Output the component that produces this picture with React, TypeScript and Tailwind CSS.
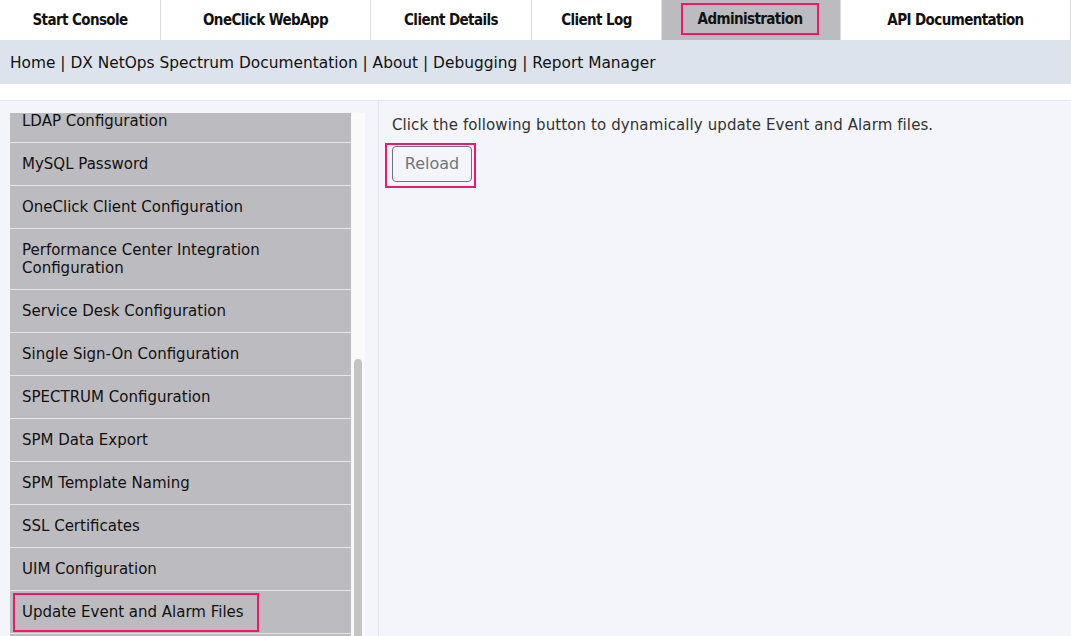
import React from "react";

const tabs = [
  { label: "Start Console", w: "w-[161px]" },
  { label: "OneClick WebApp", w: "w-[210px]" },
  { label: "Client Details", w: "w-[161px]" },
  { label: "Client Log", w: "w-[130px]" },
  { label: "Administration", w: "w-[179px]", active: true },
  { label: "API Documentation", w: "flex-1" },
];

const items: { label: string; tall?: boolean; hl?: boolean }[] = [
  { label: "LDAP Configuration" },
  { label: "MySQL Password" },
  { label: "OneClick Client Configuration" },
  { label: "Performance Center Integration Configuration", tall: true },
  { label: "Service Desk Configuration" },
  { label: "Single Sign-On Configuration" },
  { label: "SPECTRUM Configuration" },
  { label: "SPM Data Export" },
  { label: "SPM Template Naming" },
  { label: "SSL Certificates" },
  { label: "UIM Configuration" },
  { label: "Update Event and Alarm Files", hl: true },
  { label: "" },
];

export default function App() {
  return (
    <div className="w-[1071px] h-[636px] overflow-hidden bg-white flex flex-col font-['DejaVu_Sans',sans-serif] text-[#222]">
      {/* Tabs */}
      <div className="flex h-[40px] shrink-0 bg-white">
        {tabs.map((t, i) => (
          <div
            key={i}
            className={`${t.w} h-full flex items-center justify-center border-r border-[#dcdcdc] ${t.active ? "bg-[#bcbbbf]" : "bg-white"}`}
          >
            <span
              className={`font-['DejaVu_Sans_Condensed',sans-serif] font-bold text-[15px] tracking-[-0.6px] text-[#111] ${t.active ? "border-2 border-[#f0186c] w-[139px] h-[32px] flex items-center justify-center ml-[19px] mr-[21px] -mt-[2px]" : ""}`}
            >
              {t.label}
            </span>
          </div>
        ))}
      </div>
      {/* Nav bar */}
      <div className="h-[44px] shrink-0 bg-[#dce3ec] flex items-center pl-[10px] pt-[3px] text-[15.4px] text-[#111]">
        Home | DX NetOps Spectrum Documentation | About | Debugging | Report Manager
      </div>
      <div className="h-[17px] shrink-0 bg-white border-b border-[#e2e4ea]" />
      {/* Main */}
      <div className="flex flex-1 min-h-0 bg-[#f4f5fa]">
        <div className="w-[379px] shrink-0 border-r border-[#e2e4ea] pl-[10px] pt-[12px] flex">
          <div className="w-[341px] overflow-hidden">
            <div className="-mt-[13px] flex flex-col">
              {items.map((it, i) => (
                <div
                  key={i}
                  className={`bg-[#bcbbbf] border-b border-[#e6e6e8] ${it.tall ? "h-[61px]" : "h-[43px]"} flex items-center text-[15px] leading-[18px] text-[#111]`}
                >
                  {it.hl ? (
                    <span className="ml-[3px] border-2 border-[#f0186c] h-[39px] flex items-center pl-[7px] pr-[13px]">
                      {it.label}
                    </span>
                  ) : (
                    <span className={`pl-[12px] ${it.tall ? "pr-[60px]" : ""}`}>{it.label}</span>
                  )}
                </div>
              ))}
            </div>
          </div>
          <div className="w-[14px] bg-[#fafafa] pt-[246px] flex justify-center">
            <div className="w-[8px] h-full bg-[#c4c4c4] rounded-t-full" />
          </div>
        </div>
        <div className="flex-1 pl-[13px] pt-[15px]">
          <div className="text-[15px] tracking-[0.1px] text-[#333] leading-[18px]">
            Click the following button to dynamically update Event and Alarm files.
          </div>
          <div className="mt-[9px] -ml-[7px] flex w-fit border-2 border-[#f0186c] pl-[5px] pr-[2px] pt-[1px] pb-[4px]">
            <button className="w-[80px] h-[36px] border border-[#6c757d] rounded-[4px] text-[16px] text-[#6c757d] bg-transparent font-['DejaVu_Sans',sans-serif]">
              Reload
            </button>
          </div>
        </div>
      </div>
    </div>
  );
}
